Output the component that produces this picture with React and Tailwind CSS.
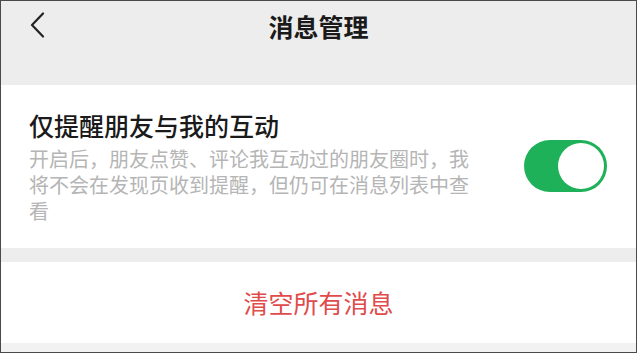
// 消息管理 — settings page with one toggle and a destructive action.
import { useState } from "react";

export default function App() {
  const [on, setOn] = useState(true);

  return (
    <div className="h-[354px] w-[641px] bg-white">
      <div
        className="flex h-[353px] w-[637px] flex-col overflow-hidden border border-[#4a4a4a] bg-[#ededed]"
        style={{ fontFamily: '"Noto Sans CJK SC", "Noto Sans", sans-serif' }}
      >
        <header className="relative flex h-[50px] shrink-0 items-center justify-center">
          <button className="absolute left-[27px] top-[10px] flex h-[28px] w-[20px] items-center justify-center">
            <svg width="16" height="26" viewBox="0 0 16 26" fill="none">
              <path d="M13 1.5 L2 13 L13 24.5" stroke="#222" strokeWidth="2.2" strokeLinecap="round" strokeLinejoin="round" />
            </svg>
          </button>
          <h1 className="text-[25px] font-bold leading-none text-[#1a1a1a]">消息管理</h1>
        </header>

        <div className="h-[34px] shrink-0" />

        <section className="flex h-[163px] shrink-0 items-start bg-white pl-[28px] pr-[29px] pt-[24px]">
          <div className="min-w-0 flex-1">
            <div className="text-[25px] font-medium leading-[32px] text-[#1a1a1a]">仅提醒朋友与我的互动</div>
            <p className="mt-[5px] w-[445px] text-[20px] leading-[26px] text-[#b5b5b5]">
              开启后，朋友点赞、评论我互动过的朋友圈时，我将不会在发现页收到提醒，但仍可在消息列表中查看
            </p>
          </div>
          <button
            onClick={() => setOn(!on)}
            className={`mt-[31px] flex h-[52px] w-[83px] shrink-0 items-center rounded-full p-[3px] ${on ? "justify-end bg-[#1fb15a]" : "justify-start bg-[#e5e5e5]"}`}
          >
            <span className="h-[46px] w-[46px] rounded-full bg-white" />
          </button>
        </section>

        <div className="h-[14px] shrink-0" />

        <button className="flex h-[81px] shrink-0 items-center justify-center bg-white text-[25px] leading-none text-[#e04b4b]">
          清空所有消息
        </button>

        <div className="flex-1 bg-[#f2f2f2]" />
      </div>
    </div>
  );
}
